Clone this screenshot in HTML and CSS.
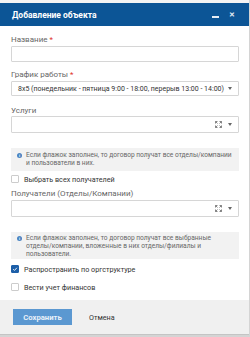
FILE: index.html
```html
<!DOCTYPE html>
<html>
    <head>
        <title>Добавление объекта</title>
        <link rel="stylesheet" href="styles.css">
    </head>
    <body>
        <div class="dialog">
            <div class="dialog-head">
                <span class="dialog-title">Добавление объекта</span>
                <span class="head-btn min"></span>
                <span class="head-btn close">&#10005;</span>
            </div>

            <div class="dialog-body">
                <div class="field-label first">Название <span class="req">*</span></div>
                <div class="input name-input"></div>

                <div class="field-label">График работы <span class="req">*</span></div>
                <div class="input select">
                    <span class="select-text">8х5 (понедельник - пятница 9:00 - 18:00, перерыв 13:00 - 14:00)</span>
                    <span class="caret"></span>
                </div>

                <div class="field-label services">Услуги</div>
                <div class="input multi">
                    <svg class="expand" width="7" height="7" viewBox="0 0 7 7">
                        <path d="M0.5 0.5h2M0.5 0.5v2M0.5 0.5l2 2M6.5 0.5h-2M6.5 0.5v2M6.5 0.5l-2 2M0.5 6.5h2M0.5 6.5v-2M0.5 6.5l2-2M6.5 6.5h-2M6.5 6.5v-2M6.5 6.5l-2-2" stroke="#777" stroke-width="0.9" fill="none"/>
                    </svg>
                    <span class="caret"></span>
                </div>

                <div class="info">
                    <span class="info-icon">i</span>
                    <span>Если флажок заполнен, то договор получат все отделы/компании и пользователи в них.</span>
                </div>
                <div class="check"><span class="box"></span>Выбрать всех получателей</div>

                <div class="field-label recipients">Получатели (Отделы/Компании)</div>
                <div class="input multi">
                    <svg class="expand" width="7" height="7" viewBox="0 0 7 7">
                        <path d="M0.5 0.5h2M0.5 0.5v2M0.5 0.5l2 2M6.5 0.5h-2M6.5 0.5v2M6.5 0.5l-2 2M0.5 6.5h2M0.5 6.5v-2M0.5 6.5l2-2M6.5 6.5h-2M6.5 6.5v-2M6.5 6.5l-2-2" stroke="#777" stroke-width="0.9" fill="none"/>
                    </svg>
                    <span class="caret"></span>
                </div>

                <div class="info info-second">
                    <span class="info-icon">i</span>
                    <span>Если флажок заполнен, то договор получат все выбранные отделы/компании, вложенные в них отделы/филиалы и пользователи.</span>
                </div>
                <div class="check spread"><span class="box checked">
                    <svg width="8" height="8" viewBox="0 0 8 8"><path d="M1.6 4.2l1.7 1.7 3.2-3.5" stroke="#fff" stroke-width="1.2" fill="none"/></svg>
                </span>Распространить по оргструктуре</div>
                <div class="check finance"><span class="box"></span>Вести учет финансов</div>
            </div>

            <div class="dialog-foot">
                <button class="btn-save">Сохранить</button>
                <button class="btn-cancel">Отмена</button>
            </div>
        </div>
    </body>
</html>
```

FILE: styles.css
```css
* {
    box-sizing: border-box;
    margin: 0;
    padding: 0;
}

body {
    background: #d4d4d4;
    font-family: Roboto, "Liberation Sans", sans-serif;
    color: #333;
    width: 250px;
    height: 337px;
    overflow: hidden;
}

.dialog {
    width: 249px;
    height: 335px;
    background: #fff;
    border-top: 3px solid #f4f4f4;
}

.dialog-head {
    height: 23px;
    background: #0c5596;
    color: #fff;
    display: flex;
    align-items: center;
    padding: 0 14px 0 12px;
}

.dialog-title {
    flex: 1;
    font-weight: bold;
    font-size: 8.5px;
}

.head-btn.min {
    width: 7px;
    height: 1.5px;
    background: #e6edf5;
    margin-right: 10px;
    margin-top: 5px;
}

.head-btn.close {
    font-size: 6.5px;
    font-weight: bold;
    color: #e6edf5;
}

.dialog-body {
    height: 274px;
    padding: 9px 10px 0 11px;
}

.field-label {
    color: #666;
    font-size: 8px;
    line-height: 9px;
    height: 9px;
    margin-top: 8px;
    margin-bottom: 2px;
}

.field-label.first {
    margin-top: 0;
}

.field-label.services {
    margin-top: 10px;
    margin-bottom: 1px;
}

.field-label.recipients {
    margin-top: 5px;
}

.req {
    color: #e0302a;
}

.input {
    height: 17px;
    border: 1px solid #d6d6d6;
    border-radius: 1px;
    display: flex;
    align-items: center;
    justify-content: flex-end;
    padding: 0 6px;
}

.name-input {
    height: 16px;
}

.select {
    justify-content: space-between;
    height: 15px;
    font-size: 7px;
    color: #333;
}

.caret {
    flex: none;
    width: 0;
    height: 0;
    border-left: 2.5px solid transparent;
    border-right: 2.5px solid transparent;
    border-top: 3px solid #666;
}

.multi .expand {
    margin-right: 6px;
}

.info {
    background: #f2f2f2;
    color: #666;
    font-size: 6.6px;
    line-height: 8px;
    padding: 3px 5px 4px 6px;
    display: flex;
    gap: 4px;
    margin-top: 15px;
}

.info-second {
    padding: 2px 5px 1px 6px;
}

.info-icon {
    flex: none;
    width: 5px;
    height: 5px;
    margin-top: 1.5px;
    border-radius: 50%;
    background: #4a84c2;
    color: #fff;
    font-size: 4px;
    line-height: 5px;
    text-align: center;
    font-weight: bold;
}

.check {
    display: flex;
    align-items: center;
    gap: 5px;
    font-size: 7.2px;
    color: #333;
    height: 10px;
    margin-top: 3px;
}

.check.spread {
    margin-top: 5px;
}

.check.finance {
    margin-top: 8px;
}

.box {
    width: 8px;
    height: 8px;
    border: 1px solid #ccc;
    border-radius: 1px;
    background: #fff;
    display: flex;
    align-items: center;
    justify-content: center;
}

.box.checked {
    background: #1d5fa8;
    border-color: #1d5fa8;
}

.dialog-foot {
    height: 35px;
    background: #f0f0f0;
    border-bottom: 1px solid #c4c4c4;
    display: flex;
    align-items: center;
    padding: 0 13px 0 13px;
    gap: 17px;
}

.btn-save {
    width: 59px;
    height: 16px;
    border: none;
    background: #5b98d1;
    color: #e8f1fa;
    font-family: Roboto, "Liberation Sans", sans-serif;
    font-weight: bold;
    font-size: 7.7px;
}

.btn-cancel {
    border: none;
    background: none;
    color: #333;
    font-family: Roboto, "Liberation Sans", sans-serif;
    font-size: 7.2px;
}
```
